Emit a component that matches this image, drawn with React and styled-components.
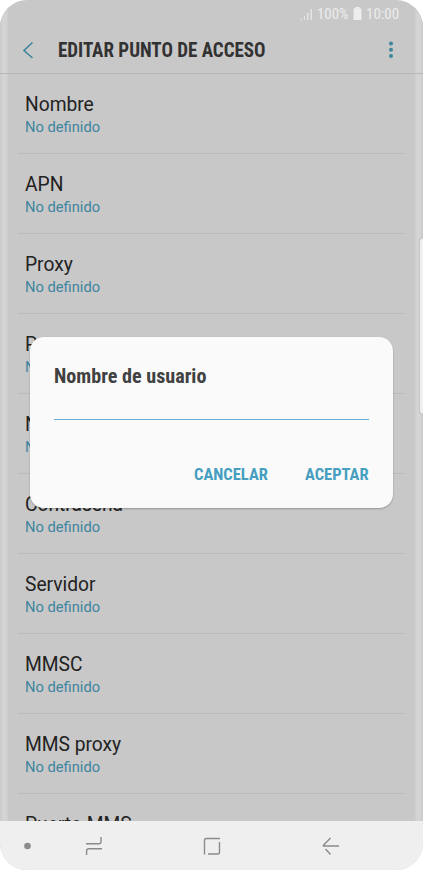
import React from 'react';
import styled, { createGlobalStyle } from 'styled-components';

const GlobalStyle = createGlobalStyle`
  *, *::before, *::after { box-sizing: border-box; }
  body { margin: 0; background: #fff; font-family: Roboto, sans-serif; }
`;

const Phone = styled.div`
  position: relative;
  display: flex;
  flex-direction: column;
  width: 423px;
  height: 870px;
  overflow: hidden;
  border-radius: 27px;
  background: #c8c8c8;
`;

const EdgeGlow = styled.div`
  position: absolute;
  top: 0;
  bottom: 49px;
  width: 9px;
  ${({ $side }) => $side}: 0;
  background: linear-gradient(
    to ${({ $side }) => ($side === 'left' ? 'right' : 'left')},
    #cacaca 0, #d1d1d1 2px, #d5d5d5 4px, #d4d4d4 6px, #c8c8c8 9px
  );
`;

const EdgeHandle = styled.div`
  position: absolute;
  top: 238px;
  right: -5px;
  width: 8px;
  height: 176px;
  border-radius: 4px;
  background: #f0f0f0;
  box-shadow: 0 0 2px rgba(0, 0, 0, 0.25);
`;

const StatusBar = styled.div`
  display: flex;
  flex: 0 0 28px;
  align-items: center;
  justify-content: flex-end;
  padding-right: 24px;
  color: #ededed;
  font-size: 15px;
  line-height: 28px;
`;

const SignalIcon = styled.svg`
  width: 13px;
  height: 13px;
  margin-right: 4px;
`;

const BatteryIcon = styled.svg`
  width: 9px;
  height: 13px;
  margin: 0 4px 2px 5px;
`;

const Condensed = styled.span`
  display: block;
  flex: none;
  white-space: nowrap;
  font-stretch: 75%;
  font-size: ${({ $size }) => $size}px;
  font-weight: ${({ $weight }) => $weight || 700};
  transform: scaleX(${({ $scale }) => $scale || 1});
  transform-origin: left center;
  width: ${({ $width }) => $width}px;
`;

const Header = styled.header`
  position: relative;
  display: flex;
  flex: 0 0 46px;
  align-items: center;
  padding: 0 26px 0 22px;
  border-bottom: 1px solid #b8b8b8;
  color: #323232;
`;

const BackIcon = styled.svg`
  width: 12px;
  height: 18px;
  margin: 0 24px 2px 0;
`;

const MenuIcon = styled.svg`
  width: 6px;
  height: 18px;
  margin: 0 3px 2px auto;
`;

const List = styled.main`
  flex: 1;
  min-height: 0;
  overflow: hidden;
  padding: 0 18px 0 18px;
`;

const Row = styled.div`
  height: 80px;
  padding: 19px 0 0 7px;
  border-bottom: 1px solid #bababa;
`;

const RowTitle = styled.div`
  color: #222;
  font-size: 19.6px;
  line-height: 23px;
  transform: scaleX(0.98);
  transform-origin: left center;
`;

const RowValue = styled.div`
  margin-top: 2px;
  color: #3f859e;
  font-size: 15px;
  line-height: 19px;
  transform: scaleX(0.98);
  transform-origin: left center;
`;

const NavBar = styled.nav`
  position: relative;
  display: flex;
  flex: 0 0 49px;
  background: #efefef;
`;

const NavIcons = styled.svg`
  width: 423px;
  height: 49px;
`;

const Dialog = styled.section`
  position: absolute;
  top: 337px;
  left: 30px;
  width: 363px;
  height: 171px;
  padding: 26px 24px 0;
  border-radius: 14px;
  background: #fafafa;
  box-shadow: 0 1px 2px rgba(0, 0, 0, 0.25);
`;

const DialogTitle = styled.div`
  color: #414141;
  line-height: 26px;
`;

const TextField = styled.div`
  height: 31px;
  border-bottom: 1px solid #5fb2d0;
`;

const Actions = styled.div`
  display: flex;
  justify-content: flex-end;
  gap: 37px;
  margin-top: 44px;
  color: #469fc0;
  line-height: 20px;
`;

const settings = [
  'Nombre', 'APN', 'Proxy', 'Puerto', 'Nombre de usuario',
  'Contraseña', 'Servidor', 'MMSC', 'MMS proxy', 'Puerto MMS',
];

export default function App() {
  return (
    <>
      <GlobalStyle />
      <Phone>
        <EdgeGlow $side="left" />
        <EdgeGlow $side="right" />
        <StatusBar>
          <SignalIcon viewBox="0 0 13 13" fill="#e5e5e5">
            <path d="M0 12l2-2v2zM4 8h1v4H4zM7 5h1.4v7H7zM10.5 1H12v11h-1.5z" />
          </SignalIcon>
          <Condensed $size={15.5} $weight={400} $scale={0.96} $width={31}>100%</Condensed>
          <BatteryIcon viewBox="0 0 9 13" fill="#ededed">
            <path d="M2.5 0h4v1.300h1.200q.8 0 .8.8V13H.5V2.100q0-.8.8-.8h1.200z" />
          </BatteryIcon>
          <Condensed $size={15.5} $weight={400} $scale={0.97} $width={33}>10:00</Condensed>
        </StatusBar>
        <Header>
          <BackIcon viewBox="0 0 12 18" fill="none" stroke="#3f859e" strokeWidth="1.6">
            <path d="M10.500 1.500L2 9.500l8.500 7.500" />
          </BackIcon>
          <Condensed $size={19.7} $scale={0.965} $width={208}>EDITAR PUNTO DE ACCESO</Condensed>
          <MenuIcon viewBox="0 0 6 18" fill="#3f859e">
            <circle cx="3" cy="2.500" r="2" />
            <circle cx="3" cy="8.800" r="2" />
            <circle cx="3" cy="15" r="2" />
          </MenuIcon>
        </Header>
        <List>
          {settings.map((name) => (
            <Row key={name}>
              <RowTitle>{name}</RowTitle>
              <RowValue>No definido</RowValue>
            </Row>
          ))}
        </List>
        <NavBar>
          <NavIcons viewBox="0 821 423 49" fill="none" stroke="#8b8b8b" strokeWidth="1.4">
            <circle cx="27.5" cy="846" r="3.3" fill="#8b8b8b" stroke="none" />
            <path d="M86 843.800h13q2 0 2-2V837M86.600 855v-4.300q0-2 2-2H102" />
            <path d="M220 838.500h-13.500q-2 0-2 2V854.500M208 854h9.500q2 0 2-2V842" />
            <path d="M330.500 838l-7 7.200q-.8.8.5.8H339M325.500 849l5 5.500" />
          </NavIcons>
        </NavBar>
        <EdgeHandle />
        <Dialog role="dialog">
          <DialogTitle>
            <Condensed $size={20.7} $scale={0.973} $width={153}>Nombre de usuario</Condensed>
          </DialogTitle>
          <TextField />
          <Actions>
            <Condensed $size={17.2} $scale={0.96} $width={74}>CANCELAR</Condensed>
            <Condensed $size={17.2} $scale={0.96} $width={64}>ACEPTAR</Condensed>
          </Actions>
        </Dialog>
      </Phone>
    </>
  );
}
